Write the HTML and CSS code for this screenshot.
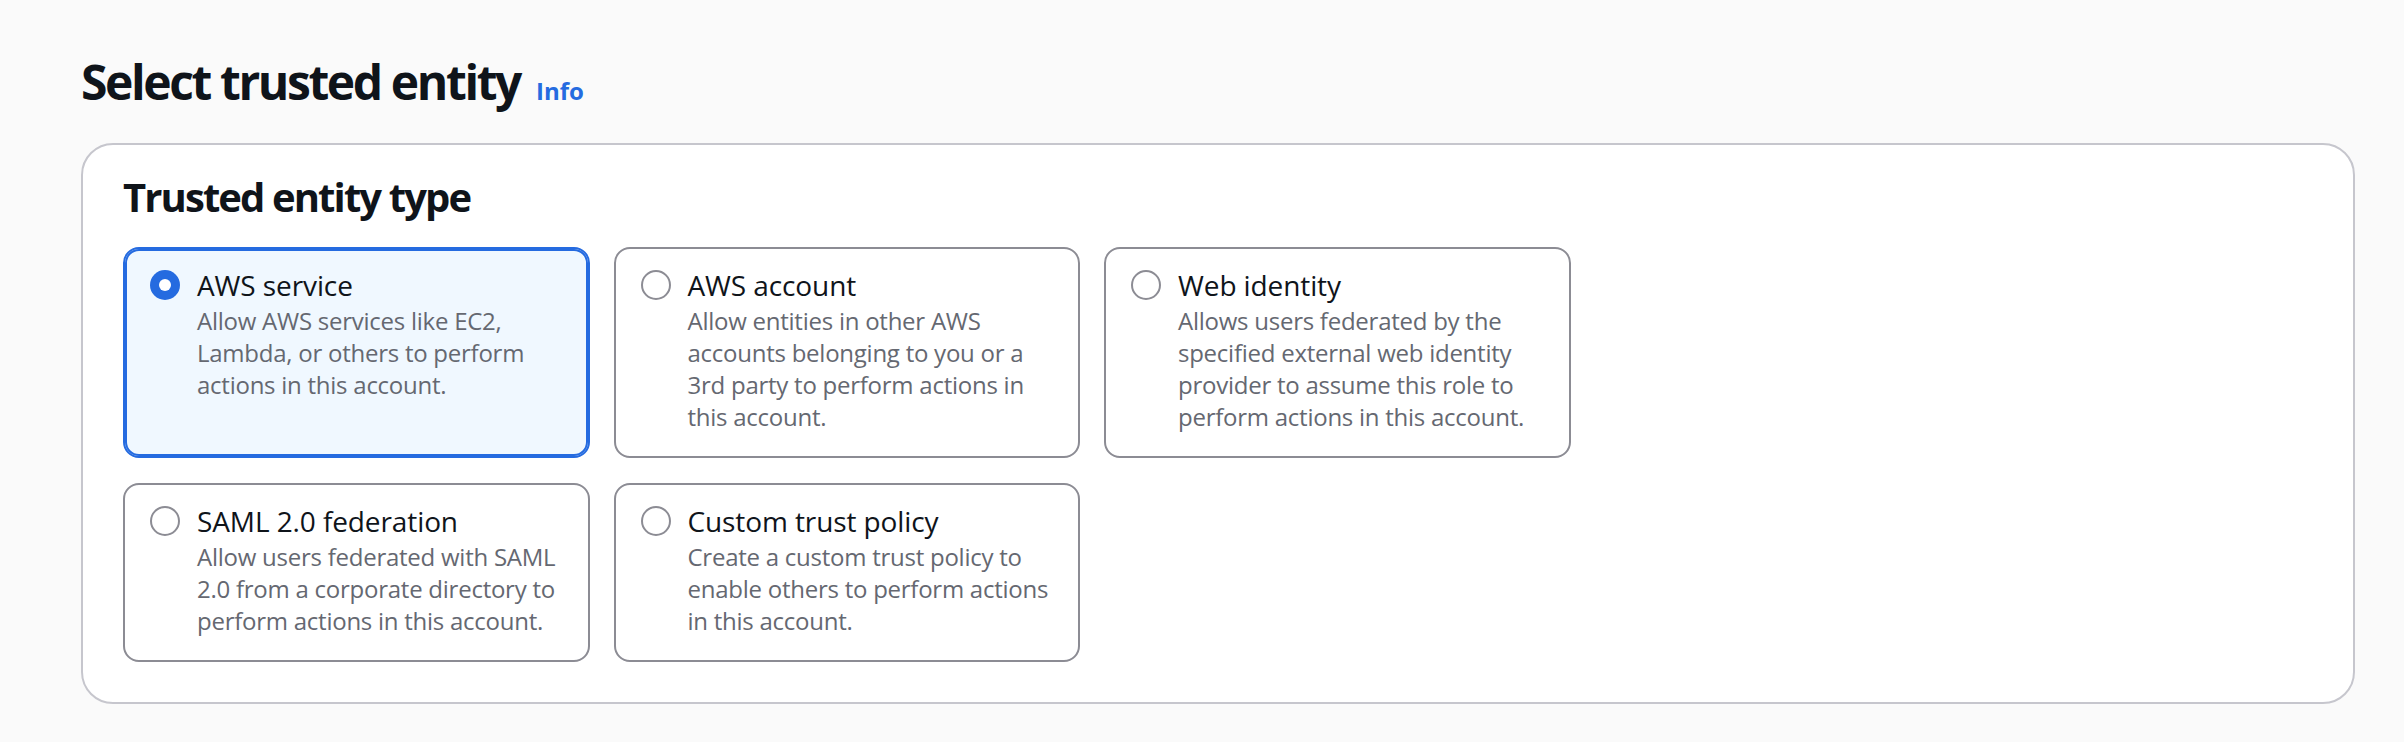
FILE: index.html
```html
<!DOCTYPE html>
<html lang="en">
<head>
<meta charset="utf-8">
<title>Select trusted entity</title>
<link rel="stylesheet" href="styles.css">
</head>
<body>
<main class="page">
  <div class="title-row">
    <h1 class="page-title">Select trusted entity</h1>
    <a class="info" href="#">Info</a>
  </div>
  <section class="panel">
    <h2 class="panel-title">Trusted entity type</h2>
    <div class="tiles">
      <label class="tile selected">
        <span class="radio">
          <svg width="32" height="32" viewBox="0 0 32 32"><circle cx="16" cy="16" r="15" class="dot-on"/><circle cx="16" cy="16" r="6" fill="#ffffff"/></svg>
        </span>
        <span class="tile-text">
          <span class="tile-title">AWS service</span>
          <span class="tile-desc">Allow AWS services like EC2, Lambda, or others to perform actions in this account.</span>
        </span>
      </label>
      <label class="tile">
        <span class="radio">
          <svg width="32" height="32" viewBox="0 0 32 32"><circle cx="16" cy="16" r="14" class="dot-off"/></svg>
        </span>
        <span class="tile-text">
          <span class="tile-title">AWS account</span>
          <span class="tile-desc">Allow entities in other AWS accounts belonging to you or a 3rd party to perform actions in this account.</span>
        </span>
      </label>
      <label class="tile">
        <span class="radio">
          <svg width="32" height="32" viewBox="0 0 32 32"><circle cx="16" cy="16" r="14" class="dot-off"/></svg>
        </span>
        <span class="tile-text">
          <span class="tile-title">Web identity</span>
          <span class="tile-desc">Allows users federated by the specified external web identity provider to assume this role to perform actions in this account.</span>
        </span>
      </label>
      <label class="tile">
        <span class="radio">
          <svg width="32" height="32" viewBox="0 0 32 32"><circle cx="16" cy="16" r="14" class="dot-off"/></svg>
        </span>
        <span class="tile-text">
          <span class="tile-title">SAML 2.0 federation</span>
          <span class="tile-desc">Allow users federated with SAML 2.0 from a corporate directory to perform actions in this account.</span>
        </span>
      </label>
      <label class="tile">
        <span class="radio">
          <svg width="32" height="32" viewBox="0 0 32 32"><circle cx="16" cy="16" r="14" class="dot-off"/></svg>
        </span>
        <span class="tile-text">
          <span class="tile-title">Custom trust policy</span>
          <span class="tile-desc">Create a custom trust policy to enable others to perform actions in this account.</span>
        </span>
      </label>
    </div>
  </section>
</main>
</body>
</html>
```
FILE: styles.css
```css
html, body {
  margin: 0;
  padding: 0;
}
body {
  background: #fafafa;
  font-family: "Open Sans", "Noto Sans", sans-serif;
  color: #0f141a;
}
.page {
  padding: 52px 49px 0 81px;
}
.title-row {
  display: flex;
  align-items: baseline;
  gap: 16px;
  margin-bottom: 31px;
}
.page-title {
  margin: 0;
  font-size: 48px;
  line-height: 60px;
  font-weight: 700;
  letter-spacing: -2.4px;
  color: #0f141a;
}
.info {
  font-size: 24px;
  font-weight: 700;
  color: #256be0;
  text-decoration: none;
}
.panel {
  background: #ffffff;
  border: 2px solid #c6c6cd;
  border-radius: 32px;
  padding: 28px 40px 40px 40px;
}
.panel-title {
  margin: 0 0 26px 0;
  font-size: 40px;
  line-height: 48px;
  font-weight: 700;
  letter-spacing: -1.9px;
  color: #0f141a;
}
.tiles {
  display: grid;
  grid-template-columns: repeat(3, 466.5px);
  column-gap: 24px;
  row-gap: 25px;
}
.tile {
  display: flex;
  gap: 16px;
  border: 2px solid #8c8c94;
  border-radius: 16px;
  padding: 16px 24px 23px 24px;
  background: #ffffff;
}
.tile.selected {
  border-color: #256be0;
  box-shadow: inset 0 0 0 2px #256be0;
  background: #f0f8ff;
}
.radio {
  flex: none;
  width: 32px;
  height: 40px;
  display: flex;
  align-items: center;
}
.radio svg {
  display: block;
}
.dot-on {
  fill: #256be0;
}
.dot-off {
  fill: #ffffff;
  stroke: #8c8c94;
  stroke-width: 2;
}
.tile-text {
  display: flex;
  flex-direction: column;
}
.tile-title {
  font-size: 28px;
  line-height: 40px;
  letter-spacing: -0.1px;
  color: #0f141a;
}
.tile-desc {
  font-size: 24px;
  line-height: 32px;
  letter-spacing: -0.25px;
  color: #656871;
}
```
